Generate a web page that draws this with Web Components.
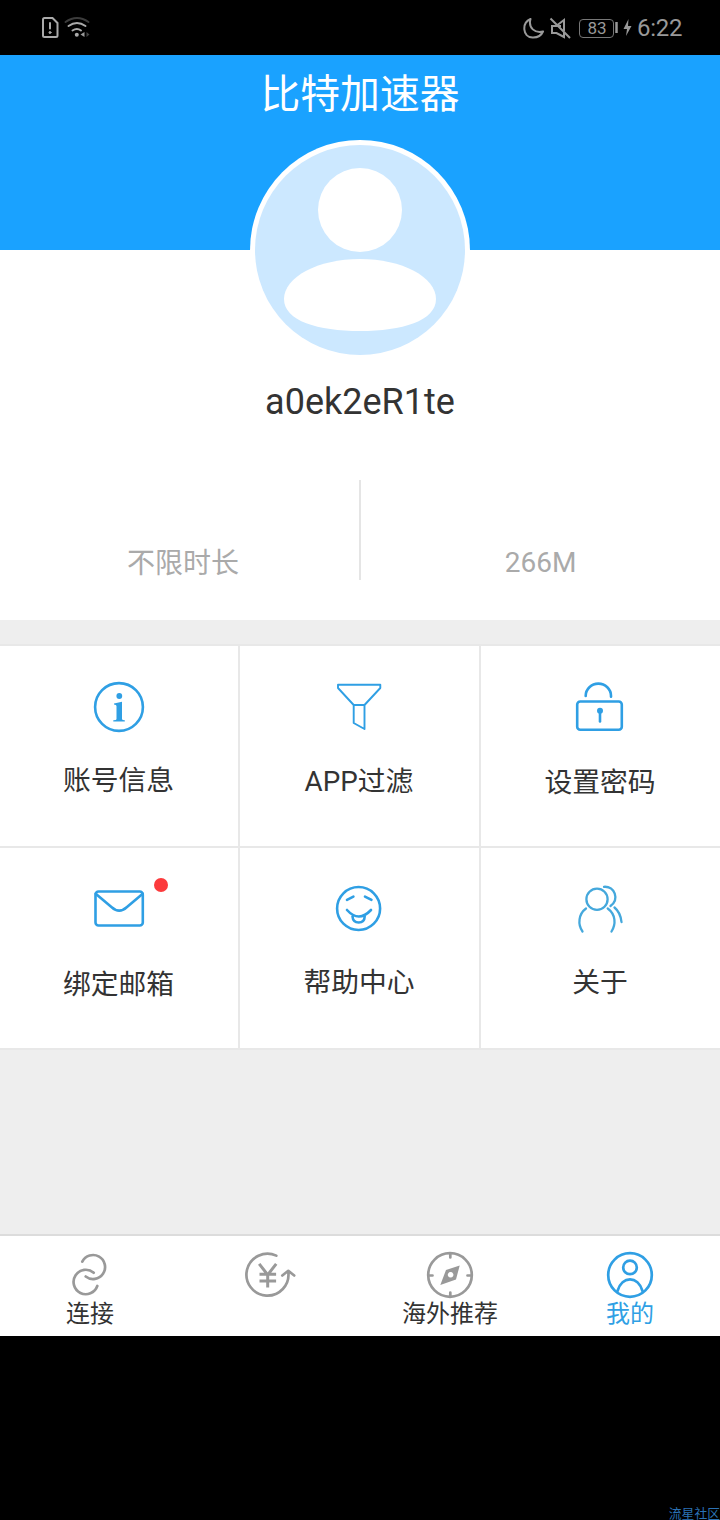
<!DOCTYPE html>
<html lang="zh-CN">
<head>
<meta charset="utf-8">
<title>比特加速器</title>
<style>
body { margin: 0; background: #000; font-family: Roboto, "Noto Sans CJK SC", sans-serif; color: #333; }
</style>
</head>
<body>
<profile-screen></profile-screen>
<script>
function define(name, html) {
  const template = document.createElement('template');
  template.innerHTML = html;
  customElements.define(name, class extends HTMLElement {
    constructor() {
      super();
      this.attachShadow({ mode: 'open' }).append(template.content.cloneNode(true));
    }
  });
}

define('status-bar', `
<style>
:host { display: flex; height: 55px; background: #000; color: #999; justify-content: space-between; }
svg { display: block; height: 55px; flex: none; }
.right { display: flex; align-items: center; padding-right: 38px; }
.cell { display: flex; align-items: center; justify-content: center; box-sizing: border-box; width: 35px; height: 19px; border: 1.5px solid #777; border-radius: 4px; font-size: 17px; line-height: 17px; margin-top: 1px; padding-left: 1px; }
.time { font-size: 24px; line-height: 30px; width: 45px; white-space: nowrap; margin-top: 1px; letter-spacing: -0.3px; }
</style>
<svg width="100" fill="none" stroke="#aaa" stroke-width="2" stroke-linecap="round">
  <path d="M44.500 18h8l5 5v12.500q0 1.500-1.500 1.500H44.500q-1.500 0-1.500-1.500V19.500q0-1.500 1.500-1.500z"/>
  <path d="M50 23v5.500"/><circle cx="50" cy="32.500" r="1" fill="#aaa" stroke-width="1"/>
  <path d="M65.500 22q11.500-8 23 0" stroke="#3c3c3c"/>
  <path d="M68.500 26q8.500-6 17 0M72.500 30.500q4.500-3 8.500 0"/>
  <circle cx="76.800" cy="34.700" r="2" fill="#aaa" stroke="none"/>
  <path d="M84.500 32v5l-4-2.500z" fill="#999" stroke="none"/><path d="M86.500 32v5l3-2.500z" fill="#444" stroke="none"/>
</svg>
<div class="right">
  <svg width="56" fill="none" stroke="#999" stroke-width="2" stroke-linejoin="round">
    <path d="M7.500 19C-1.500 23-.5 37 9.500 37.500c5 .2 9-2.500 10.500-6C12 33.500 5 28 7.500 19z"/>
    <path d="M34.500 25l6.500-5v11M38 26h-9v7h4.500l7.500 4v-5M27.500 18.500L47 38" stroke-linejoin="miter"/>
  </svg>
  <div class="cell">83</div>
  <svg width="23"><path d="M2.500 22v11" stroke="#999" stroke-width="2.500"/><path d="M14.500 19l-5 10h3.500l-1 7 5.500-10h-3.500z" fill="#999"/></svg>
  <div class="time">6:22</div>
</div>`);

define('profile-header', `
<style>
:host { display: block; height: 565px; background: linear-gradient(#1aa2ff 195px, #fff 195px); text-align: center; }
h1 { margin: 0; height: 85px; padding-top: 10px; box-sizing: border-box; font-size: 39.8px; line-height: 60px; font-weight: 400; color: #fff; }
svg { display: block; margin: 0 auto; }
.name { font-size: 36px; line-height: 44px; margin-top: 20px; height: 100px; box-sizing: border-box; }
.stats { display: grid; grid-template-columns: 359px 2px 359px; height: 100px; color: #aaa; font-size: 28px; line-height: 36px; }
.stats div { align-self: end; margin-bottom: -1px; }
.stats div:first-child { padding-left: 7px; margin-bottom: -2px; }
.stats i { background: #e5e5e5; }
</style>
<h1><slot name="title"></slot></h1>
<svg width="220" height="220">
  <circle cx="110" cy="110" r="110" fill="#fff"/><circle cx="110" cy="110" r="105" fill="#cce8ff"/>
  <circle cx="110" cy="70" r="42" fill="#fff"/>
  <path fill="#fff" d="M34 159C34 137 68 119 110 119s76 18 76 40c0 22-34 32-76 32s-76-10-76-32z"/>
</svg>
<div class="name"><slot name="name"></slot></div>
<div class="stats"><div><slot name="duration"></slot></div><i></i><div><slot name="data"></slot></div></div>`);

define('menu-grid', `
<style>
:host { display: grid; grid-template-columns: 238px 239px 239px; grid-template-rows: 200px 200px; gap: 2px; padding: 2px 0; margin-top: 24px; background: #e8e8e8; }
</style><slot></slot>`);

define('menu-item', `
<style>
:host { display: block; position: relative; background: #fff; padding-top: 30px; box-sizing: border-box; text-align: center; font-size: 27.8px; line-height: 40px; }
.label { padding-top: var(--gap, 26px); padding-right: 1px; }
::slotted(svg) { display: block; width: 100%; height: 60px; fill: none; stroke: #2f9fe4; stroke-width: 2.6px; stroke-linecap: round; stroke-linejoin: round; }
::slotted([slot=badge]) { position: absolute; left: 154px; top: 30px; width: 14px; height: 14px; border-radius: 50%; background: #fc3a3c; }
</style>
<slot name="icon"></slot><slot name="badge"></slot><div class="label"><slot></slot></div>`);

define('tab-bar', `
<style>
:host { display: grid; grid-template-columns: repeat(4, 180px); height: 100px; border-top: 2px solid #dcdcdc; background: #fff; }
</style><slot></slot>`);

define('tab-item', `
<style>
:host { display: block; text-align: center; font-size: 24px; line-height: 30px; color: #333; --icon: #999; }
:host([active]) { color: #2f9fe4; --icon: #2f9fe4; }
::slotted(svg) { display: block; width: 180px; height: 63px; fill: none; stroke: var(--icon); stroke-width: 2.7px; stroke-linecap: round; stroke-linejoin: round; }
</style>
<slot name="icon"></slot><slot></slot>`);

define('site-mark', `
<style>
:host { display: flex; justify-content: flex-end; align-items: flex-end; height: 184px; font-size: 12.8px; line-height: 13px; color: #2b72b5; }
span { white-space: nowrap; }
</style><span><slot></slot></span>`);

define('profile-screen', `
<style>
:host { display: flex; flex-direction: column; width: 720px; height: 1520px; overflow: hidden; background: #eee; }
tab-bar { margin-top: auto; }
site-mark { background: #000; flex: none; }
</style>
<status-bar></status-bar>
<profile-header>
  <span slot="title">比特加速器</span><span slot="name">a0ek2eR1te</span>
  <span slot="duration">不限时长</span><span slot="data">266M</span>
</profile-header>
<menu-grid>
  <menu-item style="--gap:25px">
    <svg slot="icon"><circle cx="119" cy="31" r="23.900"/><circle cx="119.300" cy="20" r="2.900" fill="#2f9fe4" stroke="none"/><path d="M114 27.500l8-1.800V43q0 1.200 2.800 1.200v1.300h-11.500v-1.300q3.200 0 3.200-1.200V30q0-1.500-2.500-1.500z" fill="#2f9fe4" stroke="none"/></svg>账号信息</menu-item>
  <menu-item style="--gap:26px">
    <svg slot="icon"><path style="stroke-width:1.9px" d="M98 8.700h42.300V12L124.500 29h-10.800L98 12zM113.700 29v18l10.800 6V29"/></svg>APP过滤</menu-item>
  <menu-item style="--gap:27px">
    <svg slot="icon"><rect x="96.200" y="25.500" width="44.600" height="28.300" rx="3"/><path d="M104.700 20v-.2a12.600 12.100 0 0 1 25.300 0v1"/><circle cx="119" cy="34.700" r="3" fill="#2f9fe4" stroke="none"/><path d="M119 35v10.500"/></svg>设置密码</menu-item>
  <menu-item style="--gap:27px">
    <svg slot="icon"><rect x="95.500" y="13.500" width="47.300" height="34" rx="3"/><path d="M95.700 15.700l16 13.500q7.500 6.800 15 0l16-13.500"/></svg><i slot="badge"></i>绑定邮箱</menu-item>
  <menu-item style="--gap:25px">
    <svg slot="icon"><circle cx="118.600" cy="30.500" r="21.500"/><path d="M107 21.800l6.400-3.200M125 18.600l6.500 3.200M107 32q11.700 13 24 0M112.500 38.500q.5 6 6.200 6t6-6"/></svg>帮助中心</menu-item>
  <menu-item style="--gap:25px">
    <svg slot="icon" style="stroke:#45a8dc;stroke-width:2.300px"><circle cx="116" cy="21.300" r="10.600"/><path d="M123 8.800C134 8 138.500 21.500 129.500 28M105 30.500C97.500 36 96.500 46.500 101.500 53.500M126.700 30.500C135 36.500 135 46.500 130.500 53.500M133.500 29.500Q139.500 34.500 140.500 44"/></svg>关于</menu-item>
</menu-grid>
<tab-bar>
  <tab-item><svg slot="icon"><path d="M82.300 25.700A12 12 0 1 1 85.700 40.500M93.700 36.700A12.200 12.200 0 1 0 97.300 50"/></svg>连接</tab-item>
  <tab-item><svg slot="icon"><path d="M96.300 19.600A21 21 0 1 0 108.300 36M102.300 39.500l6-4.700 5.900 4.700"/><path style="stroke-width:3px;stroke-linecap:butt" d="M79.200 27.800l8.500 11 8.500-11M87.700 38v13.500M79.500 38.300h16.600M79.500 45h16.600"/></svg></tab-item>
  <tab-item><svg slot="icon"><circle cx="90" cy="39" r="21.800"/><path d="M90.300 18v3.500M90.300 56.500V60M69 39.500h3.500M107.500 39.500h3.500"/><path style="fill:#999;stroke:none" fill-rule="evenodd" d="M99.700 29.500L96 43.500 80.300 49 86 34zM90.600 36a2.800 2.800 0 1 0 .01 0z"/></svg>海外推荐</tab-item>
  <tab-item active><svg slot="icon"><circle cx="90" cy="39" r="21.800"/><circle cx="90" cy="31.400" r="6.800"/><path d="M77.500 55C82 39.500 98 39.500 102.500 55"/></svg>我的</tab-item>
</tab-bar>
<site-mark>流星社区</site-mark>`);
</script>
</body>
</html>
